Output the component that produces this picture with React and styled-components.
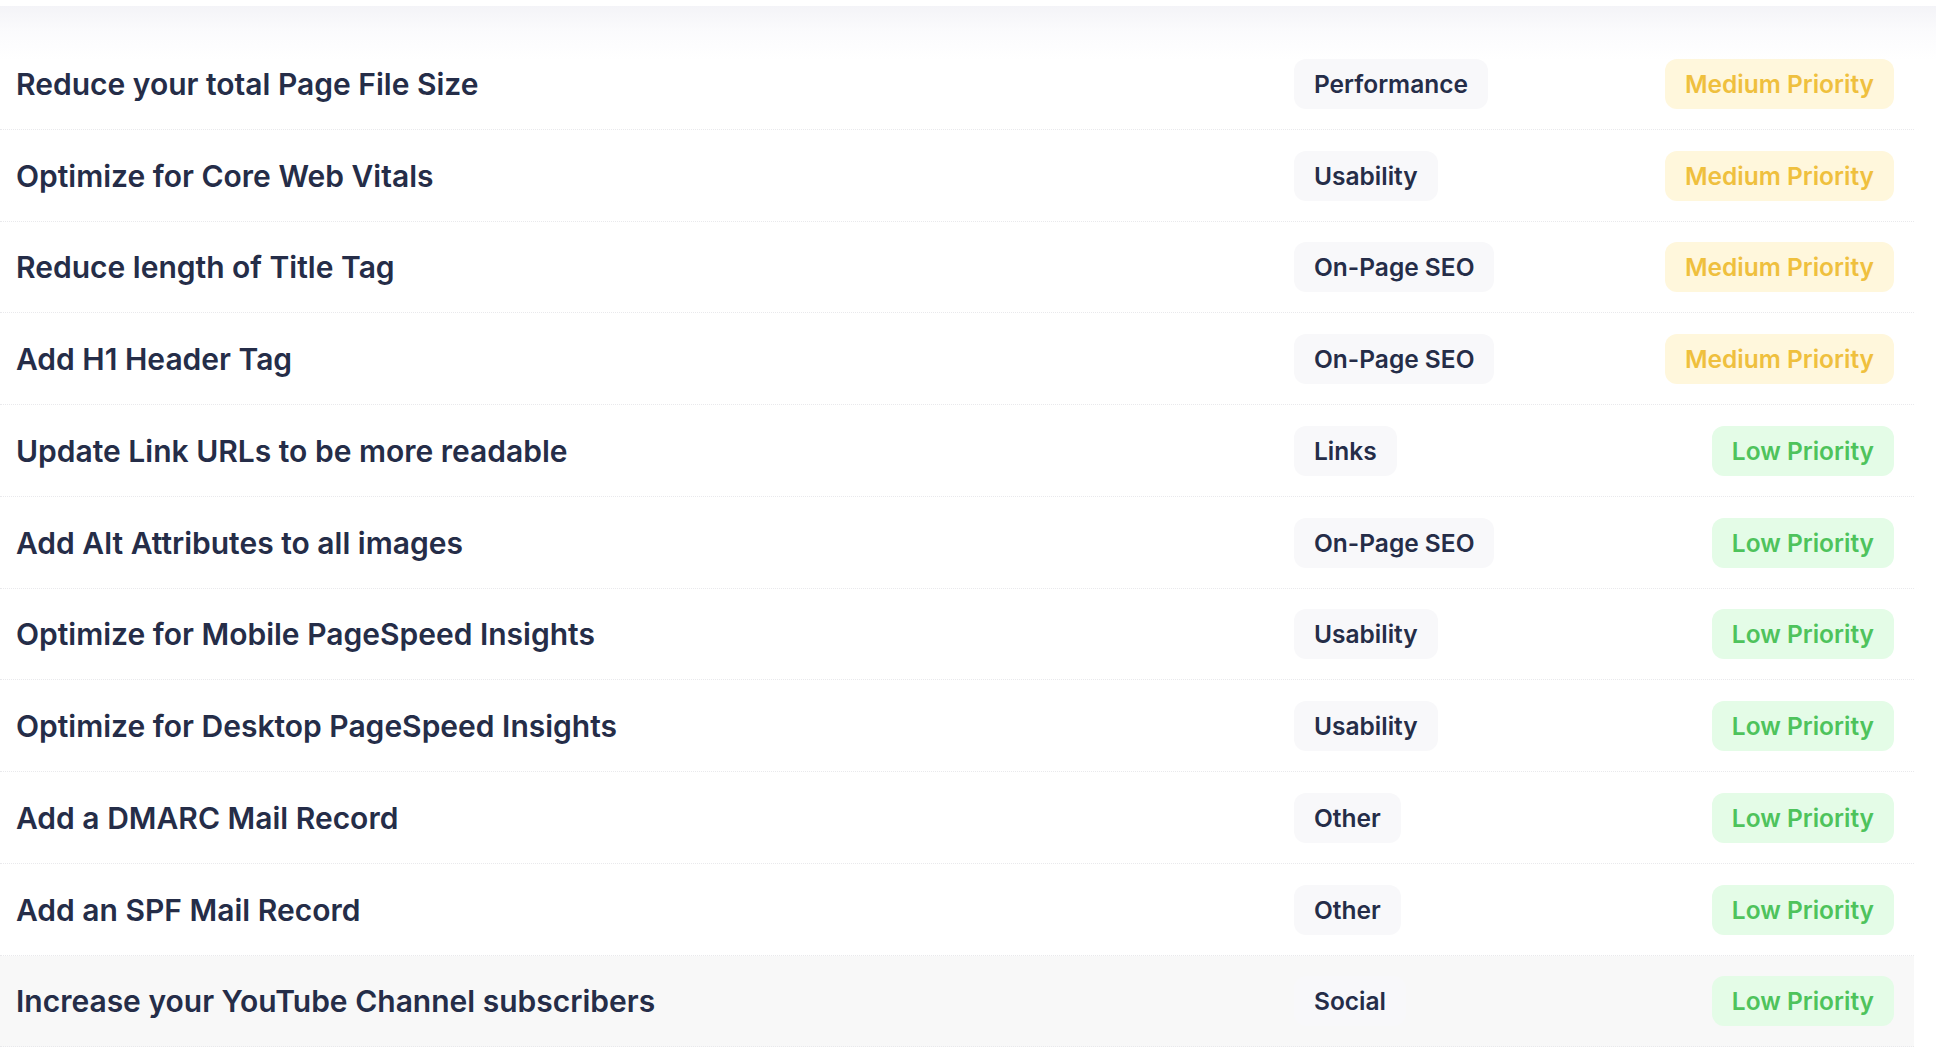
import React from "react";
import styled, { createGlobalStyle } from "styled-components";

const Global = createGlobalStyle`
  html, body {
    margin: 0;
    padding: 0;
    background: #ffffff;
  }
  body {
    font-family: Inter, "Noto Sans", "Liberation Sans", sans-serif;
    -webkit-font-smoothing: antialiased;
  }
`;

const Page = styled.div`
  position: relative;
  width: 1936px;
  padding-top: 38px;
  box-sizing: border-box;

  &::before {
    content: "";
    position: absolute;
    left: 0;
    right: 0;
    top: 6px;
    height: 54px;
    background: linear-gradient(
      to bottom,
      rgba(243, 243, 247, 0.95) 0%,
      rgba(248, 248, 251, 0.6) 45%,
      rgba(255, 255, 255, 0) 100%
    );
    pointer-events: none;
  }
`;

const List = styled.div`
  display: flex;
  flex-direction: column;
  width: 1914px;
`;

const Row = styled.div`
  display: grid;
  grid-template-columns: 1fr 320px 280px;
  align-items: center;
  height: 91.75px;
  box-sizing: border-box;
  padding: 1px 20px 0 16px;
  border-bottom: 1px dotted #e9e9ec;
  background: ${(p) => (p.$active ? "#f8f8f8" : "transparent")};
`;

const Title = styled.div`
  font-size: 30px;
  font-weight: 600;
  color: #252d48;
  white-space: nowrap;
`;

const Category = styled.div`
  justify-self: start;
  display: inline-flex;
  align-items: center;
  height: 50px;
  padding: 0 20px;
  border-radius: 12px;
  background: #f8f8fa;
  font-size: 24.5px;
  font-weight: 600;
  color: #252d48;
  white-space: nowrap;
`;

const Priority = styled.div`
  justify-self: end;
  display: inline-flex;
  align-items: center;
  height: 50px;
  padding: 0 20px;
  border-radius: 12px;
  font-size: 24.5px;
  font-weight: 600;
  white-space: nowrap;
  color: ${(p) => (p.$level === "medium" ? "#efc03e" : "#4ec35c")};
  background: ${(p) => (p.$level === "medium" ? "#fff7dc" : "#e4fce7")};
`;

const items = [
  ["Reduce your total Page File Size", "Performance", "medium"],
  ["Optimize for Core Web Vitals", "Usability", "medium"],
  ["Reduce length of Title Tag", "On-Page SEO", "medium"],
  ["Add H1 Header Tag", "On-Page SEO", "medium"],
  ["Update Link URLs to be more readable", "Links", "low"],
  ["Add Alt Attributes to all images", "On-Page SEO", "low"],
  ["Optimize for Mobile PageSpeed Insights", "Usability", "low"],
  ["Optimize for Desktop PageSpeed Insights", "Usability", "low"],
  ["Add a DMARC Mail Record", "Other", "low"],
  ["Add an SPF Mail Record", "Other", "low"],
  ["Increase your YouTube Channel subscribers", "Social", "low"],
];

export default function App() {
  return (
    <>
      <Global />
      <Page>
        <List>
          {items.map(([title, cat, level], i) => (
            <Row key={title} $active={i === items.length - 1}>
              <Title>{title}</Title>
              <Category>{cat}</Category>
              <Priority $level={level}>
                {level === "medium" ? "Medium Priority" : "Low Priority"}
              </Priority>
            </Row>
          ))}
        </List>
      </Page>
    </>
  );
}
